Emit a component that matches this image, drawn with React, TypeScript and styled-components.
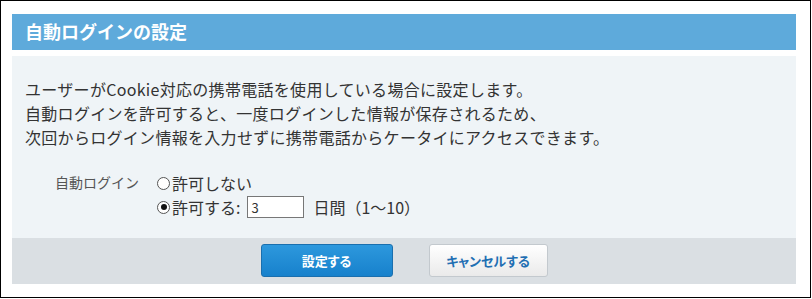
import React, { useState } from 'react';
import styled, { createGlobalStyle } from 'styled-components';

const GlobalStyle = createGlobalStyle`
  body {
    margin: 0;
    background: #ffffff;
    font-family: "Noto Sans CJK JP", "Noto Sans", sans-serif;
    color: #333333;
  }
`;

interface RadioProps {
  checked: boolean;
  label: string;
  onSelect: () => void;
}

const Radio: React.FC<RadioProps> = ({ checked, label, onSelect }) => (
  <RadioLabel onClick={onSelect}>
    <RadioMark checked={checked} />
    {label}
  </RadioLabel>
);

const App: React.FC = () => {
  const [allow, setAllow] = useState<boolean>(true);
  const [days, setDays] = useState<string>('3');

  return (
    <>
      <GlobalStyle />
      <Frame>
        <Panel>
          <Header>自動ログインの設定</Header>
          <Body>
            <Description>
              ユーザーがCookie対応の携帯電話を使用している場合に設定します。
              <br />
              自動ログインを許可すると、一度ログインした情報が保存されるため、
              <br />
              次回からログイン情報を入力せずに携帯電話からケータイにアクセスできます。
            </Description>
            <FormRow>
              <FieldLabel>自動ログイン</FieldLabel>
              <Options>
                <OptionLine>
                  <Radio
                    checked={!allow}
                    label="許可しない"
                    onSelect={(): void => setAllow(false)}
                  />
                </OptionLine>
                <OptionLine>
                  <Radio
                    checked={allow}
                    label="許可する:"
                    onSelect={(): void => setAllow(true)}
                  />
                  <DaysInput
                    value={days}
                    onChange={(e): void => setDays(e.target.value)}
                  />
                  <Unit>日間（1〜10）</Unit>
                </OptionLine>
              </Options>
            </FormRow>
          </Body>
          <Footer>
            <Button primary width={132}>
              設定する
            </Button>
            <Button width={119}>キャンセルする</Button>
          </Footer>
        </Panel>
      </Frame>
    </>
  );
};

const Frame = styled.div`
  box-sizing: border-box;
  width: 811px;
  height: 298px;
  border: 1px solid #000000;
  padding: 13px 14px 13px 11px;
`;

const Panel = styled.div`
  display: flex;
  flex-direction: column;
  height: 100%;
`;

const Header = styled.div`
  display: flex;
  align-items: center;
  height: 36px;
  padding: 0 13px 2px;
  box-sizing: border-box;
  background-color: #5eaadb;
  color: #ffffff;
  font-size: 18px;
  font-weight: bold;
`;

const Body = styled.div`
  flex: 1;
  margin-top: 6px;
  padding: 21px 13px 0;
  background-color: #eff4f7;
`;

const Description = styled.p`
  margin: 0;
  font-size: 16px;
  line-height: 24px;
  letter-spacing: 0.3px;
  color: #333333;
`;

const FormRow = styled.div`
  display: flex;
  margin-top: 22px;
  padding-left: 30px;
`;

const FieldLabel = styled.div`
  width: 102px;
  font-size: 14px;
  line-height: 22px;
  color: #555555;
`;

const Options = styled.div`
  display: flex;
  flex-direction: column;
`;

const OptionLine = styled.div`
  display: flex;
  align-items: center;
  height: 24px;
  font-size: 16px;
`;

const RadioLabel = styled.span`
  display: inline-flex;
  align-items: center;
  cursor: pointer;
`;

const RadioMark = styled.span<{ checked: boolean }>`
  position: relative;
  box-sizing: border-box;
  width: 13px;
  height: 13px;
  margin-right: 2px;
  border: 1px solid #555555;
  border-radius: 50%;
  background: #ffffff;

  &::after {
    content: '';
    display: ${(props) => (props.checked ? 'block' : 'none')};
    position: absolute;
    top: 2.5px;
    left: 2.5px;
    width: 6px;
    height: 6px;
    border-radius: 50%;
    background: #111111;
  }
`;

const DaysInput = styled.input`
  box-sizing: border-box;
  width: 57px;
  height: 22px;
  margin-left: 7px;
  padding: 1px 3px 0;
  border: 1px solid #777777;
  border-radius: 0;
  background: #ffffff;
  font-family: inherit;
  font-size: 13px;
  color: #333333;
  outline: none;
`;

const Unit = styled.span`
  margin-left: 9px;
`;

const Footer = styled.div`
  display: flex;
  justify-content: center;
  align-items: flex-start;
  gap: 36px;
  height: 46px;
  padding-top: 6px;
  box-sizing: border-box;
  background-color: #dadfe3;
`;

const Button = styled.button<{ primary?: boolean; width: number }>`
  box-sizing: border-box;
  width: ${(props) => props.width}px;
  height: 33px;
  padding: 0;
  border-radius: 3px;
  border: 1px solid ${(props) => (props.primary ? '#1a6fae' : '#c3c9ce')};
  background: ${(props) =>
    props.primary
      ? 'linear-gradient(#2d98dd, #1781cc)'
      : 'linear-gradient(#ffffff, #eaeaea)'};
  color: ${(props) => (props.primary ? '#ffffff' : '#1f6fb3')};
  font-family: inherit;
  font-size: 13px;
  font-weight: bold;
  font-feature-settings: 'palt';
  cursor: pointer;
`;

export default App;
